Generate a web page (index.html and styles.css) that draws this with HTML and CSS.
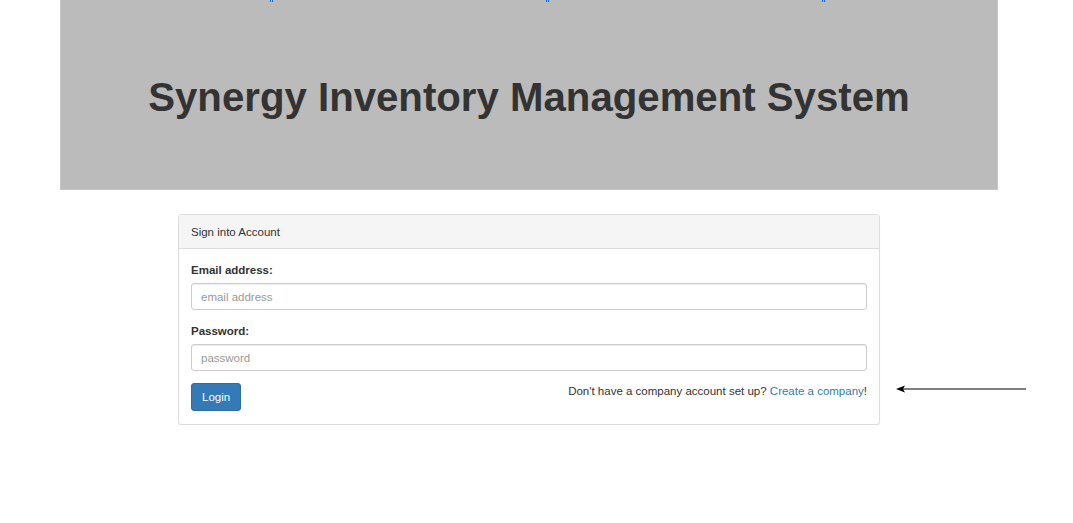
FILE: index.html
```html
<!DOCTYPE html>
<html>
<head>
<meta charset="utf-8">
<link rel="stylesheet" href="styles.css">
</head>
<body>
<div class="page">
  <header class="jumbotron">
    <div class="cut-links">
      <span class="mark"></span>
      <span class="mark"></span>
      <span class="mark"></span>
    </div>
    <h1 class="title">Synergy Inventory Management System</h1>
  </header>
  <div class="login-row">
    <section class="panel">
      <div class="panel-heading">Sign into Account</div>
      <form class="panel-body">
        <div class="form-group">
          <label class="label">Email address:</label>
          <input class="input" type="text" placeholder="email address">
        </div>
        <div class="form-group last">
          <label class="label">Password:</label>
          <input class="input" type="password" placeholder="password">
        </div>
        <div class="actions">
          <button class="btn" type="button">Login</button>
          <p class="note">Don't have a company account set up? <a class="link" href="#">Create a company</a>!</p>
        </div>
      </form>
    </section>
    <svg class="arrow" width="132" height="10" viewBox="0 0 132 10">
      <line x1="4" y1="5" x2="130" y2="5" stroke="#000" stroke-width="1.2"/>
      <polygon points="0,5 9,1.5 7,5 9,8.5" fill="#000"/>
    </svg>
  </div>
</div>
</body>
</html>
```

FILE: styles.css
```css
* { box-sizing: border-box; }
html, body { margin: 0; padding: 0; background: #fff; }
body {
  font-family: "Liberation Sans", Arial, sans-serif;
  font-size: 11.5px;
  color: #333;
}
.page {
  width: 1058px;
  display: flex;
  flex-direction: column;
  align-items: center;
}
.jumbotron {
  position: relative;
  width: 938px;
  height: 190px;
  background: #bbbbbb;
  border: 1px solid #c6c6c6;
  border-top: none;
  display: flex;
  align-items: center;
  justify-content: center;
}
.cut-links {
  position: absolute;
  top: 0;
  left: 209px;
  display: flex;
  gap: 273px;
}
.mark {
  width: 3px;
  height: 2px;
  border-left: 1px solid #0a6ce0;
  border-right: 1px solid #0a6ce0;
}
.title {
  margin: 6px 0 0 0;
  font-size: 40.2px;
  font-weight: bold;
  color: #333;
}
.login-row {
  position: relative;
  margin-top: 24px;
  width: 702px;
}
.panel {
  width: 702px;
  border: 1px solid #ddd;
  border-radius: 3px;
  background: #fff;
  box-shadow: 0 1px 1px rgba(0,0,0,0.05);
}
.panel-heading {
  height: 34px;
  padding: 0 12px;
  display: flex;
  align-items: center;
  background: #f5f5f5;
  border-bottom: 1px solid #ddd;
  color: #333;
}
.panel-body {
  margin: 0;
  padding: 13px 12px 13px 12px;
}
.form-group {
  display: flex;
  flex-direction: column;
  margin-bottom: 13px;
}
.form-group.last { margin-bottom: 12px; }
.label {
  font-weight: bold;
  line-height: 17px;
  margin-bottom: 4px;
}
.input {
  height: 27px;
  padding: 0 9px;
  border: 1px solid #ccc;
  border-radius: 3px;
  font-family: "Liberation Sans", Arial, sans-serif;
  font-size: 11.5px;
  color: #555;
  box-shadow: inset 0 1px 1px rgba(0,0,0,0.075);
}
.input::placeholder { color: #999; }
.actions {
  display: flex;
  align-items: flex-start;
  justify-content: space-between;
}
.btn {
  height: 28px;
  padding: 0 10px;
  background: #337ab7;
  border: 1px solid #2e6da4;
  border-radius: 3px;
  color: #fff;
  font-family: "Liberation Sans", Arial, sans-serif;
  font-size: 11.5px;
}
.note {
  margin: 0;
  line-height: 17px;
}
.link { color: #337ab7; text-decoration: none; }
.arrow {
  position: absolute;
  left: 718px;
  top: 170px;
}
```
